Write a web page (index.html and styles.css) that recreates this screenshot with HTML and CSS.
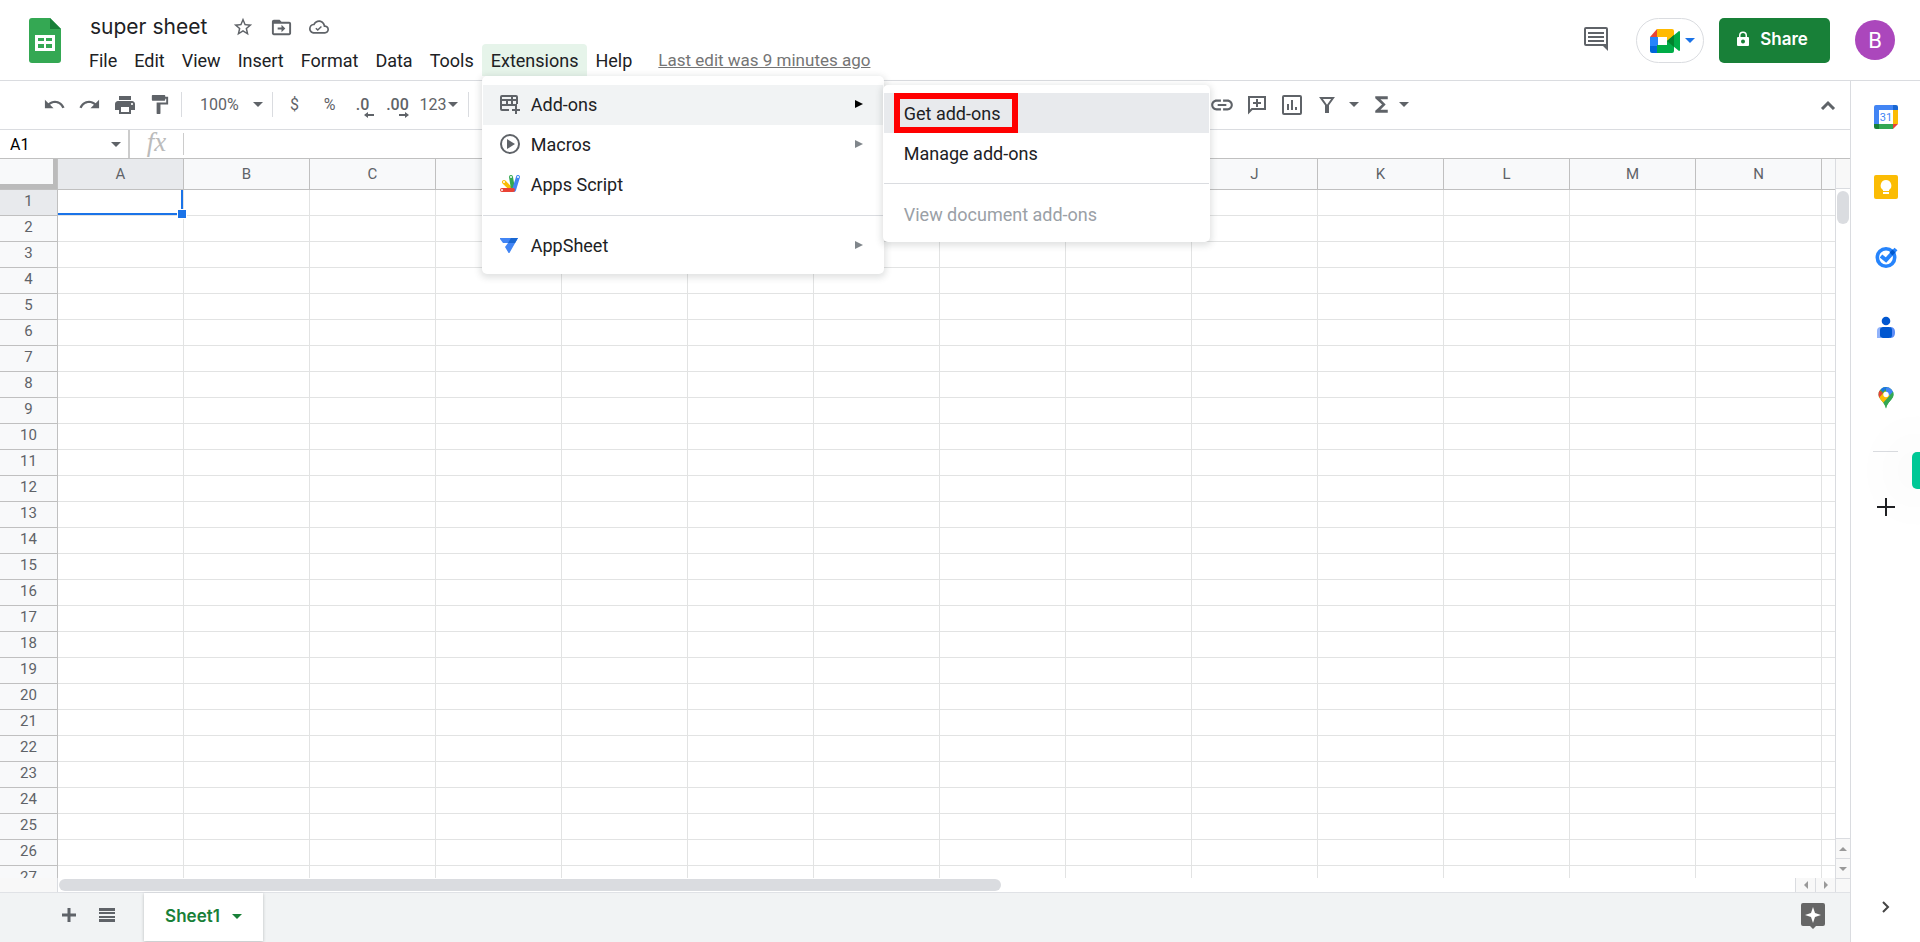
FILE: index.html
```html
<!DOCTYPE html>
<html lang="en">
<head>
<meta charset="utf-8">
<title>super sheet</title>
<link rel="stylesheet" href="styles.css">
</head>
<body>
<header class="header">
  <a class="logo" href="#" aria-label="Sheets home">
    <svg width="32" height="45" viewBox="0 0 32 45"><path fill="#34a853" d="M3 0h18l11 11v31a3 3 0 0 1-3 3H3a3 3 0 0 1-3-3V3a3 3 0 0 1 3-3z"/><path fill="#188038" d="M21 0l11 11H21z"/><path fill="#fff" fill-rule="evenodd" d="M6 17h20v16H6zM9 20v3h6v-3zM17 20v3h6v-3zM9 26v4h6v-4zM17 26v4h6v-4z"/></svg>
  </a>
  <div class="doc">
    <div class="title-row">
      <h1 class="title">super sheet</h1>
      <button class="title-btn" aria-label="Star"><svg width="22" height="22" viewBox="0 0 24 24"><path d="M22 9.24l-7.19-.62L12 2 9.19 8.63 2 9.24l5.46 4.73L5.82 21 12 17.27 18.18 21l-1.63-7.03L22 9.24zM12 15.4l-3.76 2.27 1-4.28-3.32-2.88 4.38-.38L12 6.1l1.71 4.04 4.38.38-3.32 2.88 1 4.28L12 15.4z"/></svg></button>
      <button class="title-btn" aria-label="Move"><svg width="23" height="23" viewBox="0 0 24 24"><path d="M20 6h-8l-2-2H4c-1.1 0-2 .9-2 2v12c0 1.1.9 2 2 2h16c1.1 0 2-.9 2-2V8c0-1.1-.9-2-2-2zm0 12H4V8h16v10zm-8-1l4-4-4-4v3H8v2h4z"/></svg></button>
      <button class="title-btn" aria-label="Document status"><svg width="20" height="20" viewBox="0 0 24 24"><path d="M19.35 10.04C18.67 6.59 15.64 4 12 4 9.11 4 6.61 5.64 5.36 8.04 2.35 8.36 0 10.91 0 14c0 3.31 2.69 6 6 6h13c2.76 0 5-2.24 5-5 0-2.64-2.05-4.78-4.65-4.96zM19 18H6c-2.21 0-4-1.79-4-4 0-2.05 1.53-3.76 3.56-3.97l1.07-.11.5-.95C8.08 7.14 9.94 6 12 6c2.62 0 4.88 1.86 5.39 4.43l.3 1.5 1.53.11c1.56.1 2.78 1.41 2.78 2.96 0 1.65-1.35 3-3 3zm-8.500-3.500l-1.700-1.700-1.200 1.200 2.900 2.900 5-5-1.200-1.200z"/></svg></button>
    </div>
    <nav class="menubar">
      <button class="menu-btn">File</button>
      <button class="menu-btn">Edit</button>
      <button class="menu-btn">View</button>
      <button class="menu-btn">Insert</button>
      <button class="menu-btn">Format</button>
      <button class="menu-btn">Data</button>
      <button class="menu-btn">Tools</button>
      <div class="menu-wrap">
        <button class="menu-btn menu-btn-open">Extensions</button>
        <div class="menu menu-main">
          <div class="submenu-wrap">
            <button class="item item-active">
              <svg class="item-icon" width="22" height="22" viewBox="0 0 22 22" fill="none" stroke="#5f6368" stroke-width="2"><path d="M10 17H3a1 1 0 0 1-1-1V4a1 1 0 0 1 1-1h14a1 1 0 0 1 1 1v7M2 7h16M2 12h16M8 7v5M13 3v9"/><path d="M17 13v8M13 17h8"/></svg>
              <span class="item-label">Add-ons</span>
              <svg class="item-arrow item-arrow-on" width="8" height="8" viewBox="0 0 8 8"><path d="M0 0l8 4-8 4z"/></svg>
            </button>
            <div class="menu menu-sub">
              <div class="marked">
                <button class="item item-focus">Get add-ons</button>
                <span class="marker"></span>
              </div>
              <button class="item">Manage add-ons</button>
              <hr class="rule">
              <button class="item item-off" disabled>View document add-ons</button>
            </div>
          </div>
          <button class="item">
            <svg class="item-icon" width="22" height="22" viewBox="0 0 22 22"><circle cx="11" cy="11" r="9" fill="none" stroke="#5f6368" stroke-width="2"/><path fill="#5f6368" d="M8 6l8 5-8 5z"/></svg>
            <span class="item-label">Macros</span>
            <svg class="item-arrow" width="8" height="8" viewBox="0 0 8 8"><path d="M0 0l8 4-8 4z"/></svg>
          </button>
          <button class="item">
            <svg class="item-icon" width="22" height="22" viewBox="0 0 22 22" stroke-linecap="round"><path stroke="#fbbc04" stroke-width="4" d="M5 9l8 8"/><path stroke="#34a853" stroke-width="4" d="M12 4l2 12"/><path stroke="#4285f4" stroke-width="4" d="M19 4l-4 13"/><path stroke="#ea4335" stroke-width="4" d="M3 17h11"/><g fill="#fff"><circle cx="5" cy="9" r="1"/><circle cx="12" cy="4" r="1"/><circle cx="19" cy="4" r="1"/><circle cx="3" cy="17" r="1"/></g></svg>
            <span class="item-label">Apps Script</span>
          </button>
          <hr class="rule">
          <button class="item">
            <svg class="item-icon" width="22" height="22" viewBox="0 0 22 22"><path fill="#4285f4" d="M1 4h18l-8 14a1 1 0 0 1-2 0l-3-5 3-4H4L1 5z"/><path fill="#1967d2" d="M12 4h7l-3 5H9z"/></svg>
            <span class="item-label">AppSheet</span>
            <svg class="item-arrow" width="8" height="8" viewBox="0 0 8 8"><path d="M0 0l8 4-8 4z"/></svg>
          </button>
        </div>
      </div>
      <button class="menu-btn">Help</button>
      <a class="last-edit" href="#">Last edit was 9 minutes ago</a>
    </nav>
  </div>
  <div class="actions">
    <button class="comments" aria-label="Comments"><svg width="26" height="26" viewBox="0 0 26 26" fill="none" stroke="#5f6368" stroke-width="2"><path d="M3 2h20a1 1 0 0 1 1 1v16H3a1 1 0 0 1-1-1V3a1 1 0 0 1 1-1zM5 7h16M5 11h16M5 15h16"/><path fill="#5f6368" stroke="none" d="M19 19h6v6z"/></svg></button>
    <button class="meet" aria-label="Meet">
      <svg width="30" height="24" viewBox="0 0 30 24"><path fill="#ea4335" d="M7 0v8H0z"/><path fill="#2684fc" d="M0 8h8v9H0z"/><path fill="#0066da" d="M0 17h8v7H2a2 2 0 0 1-2-2z"/><path fill="#ffba00" d="M7 0h15a2 2 0 0 1 2 2v7l-7 3V8H7z"/><path fill="#00ac47" d="M7 16h10v-4l7-3v13a2 2 0 0 1-2 2H7z"/><path fill="#00ac47" d="M17 12L29 2q1 0 1 1v18q0 1-1 1z"/><path fill="#00832d" d="M17 12l7-6v12z"/></svg>
      <svg width="10" height="5" viewBox="0 0 10 5"><path fill="#1a73e8" d="M0 0h10L5 5z"/></svg>
    </button>
    <button class="share">
      <svg width="12" height="16" viewBox="0 0 12 16"><path fill="#fff" fill-rule="evenodd" d="M2 6V4.500a4 4 0 0 1 8 0V6h1q1 0 1 1v7q0 1-1 1H1q-1 0-1-1V7q0-1 1-1zM3.500 6h5V4.500a2.500 2.500 0 0 0-5 0zM6 8.500a2 2 0 1 0 0 4 2 2 0 0 0 0-4z"/></svg>
      Share
    </button>
    <button class="avatar" aria-label="Account">B</button>
  </div>
</header>

<div class="main">
  <main class="workspace">
    <div class="toolbar">
      <button class="tool" aria-label="Undo"><svg width="23" height="23" viewBox="0 0 24 24"><path d="M12.500 8c-2.650 0-5.050.99-6.900 2.600L2 7v9h9l-3.620-3.620c1.390-1.160 3.160-1.880 5.120-1.880 3.540 0 6.550 2.310 7.600 5.500l2.370-.78C21.080 11.030 17.150 8 12.500 8z"/></svg></button>
      <button class="tool" aria-label="Redo"><svg width="23" height="23" viewBox="0 0 24 24"><path d="M18.400 10.600C16.550 8.990 14.150 8 11.500 8c-4.650 0-8.580 3.030-9.960 7.220L3.900 16c1.050-3.190 4.050-5.500 7.600-5.500 1.950 0 3.730.72 5.120 1.880L13 16h9V7l-3.600 3.600z"/></svg></button>
      <button class="tool" aria-label="Print"><svg width="24" height="24" viewBox="0 0 24 24"><path d="M19 8H5c-1.660 0-3 1.340-3 3v6h4v4h12v-4h4v-6c0-1.660-1.340-3-3-3zm-3 11H8v-5h8v5zm3-7c-.55 0-1-.45-1-1s.45-1 1-1 1 .45 1 1-.45 1-1 1zm-1-9H6v4h12V3z"/></svg></button>
      <button class="tool" aria-label="Paint format"><svg width="23" height="23" viewBox="0 0 24 24"><path d="M18 4V3c0-.55-.45-1-1-1H5c-.55 0-1 .45-1 1v4c0 .55.45 1 1 1h12c.55 0 1-.45 1-1V6h1v4H9v11c0 .55.45 1 1 1h2c.55 0 1-.45 1-1v-9h8V4h-3z"/></svg></button>
      <span class="sep"></span>
      <span class="zoom"><select class="zoom-select" aria-label="Zoom"><option>100%</option></select><svg width="10" height="5" viewBox="0 0 10 5"><path d="M0 0h10L5 5z"/></svg></span>
      <span class="sep"></span>
      <button class="tool">$</button>
      <button class="tool">%</button>
      <button class="tool tool-dec">.0<svg class="dec-arrow" width="10" height="6" viewBox="0 0 10 6"><path d="M0 3l4-3v2h6v2H4v2z"/></svg></button>
      <button class="tool tool-dec">.00<svg class="dec-arrow" width="10" height="6" viewBox="0 0 10 6"><path d="M10 3L6 0v2H0v2h6v2z"/></svg></button>
      <button class="tool tool-wide">123<svg width="10" height="5" viewBox="0 0 10 5"><path d="M0 0h10L5 5z"/></svg></button>
      <span class="sep"></span>
      <span class="toolbar-gap"></span>
      <button class="tool" aria-label="Insert link"><svg width="26" height="26" viewBox="0 0 24 24"><path d="M3.900 12c0-1.710 1.390-3.100 3.100-3.100h4V7H7c-2.760 0-5 2.240-5 5s2.240 5 5 5h4v-1.900H7c-1.710 0-3.100-1.390-3.100-3.100zM8 13h8v-2H8v2zm9-6h-4v1.900h4c1.710 0 3.100 1.390 3.100 3.100s-1.390 3.100-3.100 3.100h-4V17h4c2.760 0 5-2.240 5-5s-2.240-5-5-5z"/></svg></button>
      <button class="tool" aria-label="Insert comment"><svg width="20" height="20" viewBox="0 0 20 20" fill="none" stroke="#5f6368" stroke-width="2"><path d="M2 17V2h16v12H5zM10 4v8M6 8h8"/></svg></button>
      <button class="tool" aria-label="Insert chart"><svg width="20" height="20" viewBox="0 0 20 20" fill="none" stroke="#5f6368" stroke-width="2"><rect x="1" y="1" width="18" height="18" rx="1"/><path d="M6 9v6M10 5v10M14 12v3"/></svg></button>
      <button class="tool" aria-label="Filter"><svg width="16" height="18" viewBox="0 0 16 18" fill="none" stroke="#5f6368" stroke-width="2"><path d="M2 2h12L9 9v7H7V9z"/></svg></button>
      <button class="tool tool-caret" aria-label="Filter views"><svg width="10" height="5" viewBox="0 0 10 5"><path d="M0 0h10L5 5z"/></svg></button>
      <button class="tool" aria-label="Functions"><svg width="25" height="25" viewBox="0 0 24 24"><path d="M18 4H6v2l6.500 6L6 18v2h12v-3h-7l5-5-5-5h7z"/></svg></button>
      <button class="tool-caret-sm" aria-label="More functions"><svg width="10" height="5" viewBox="0 0 10 5"><path d="M0 0h10L5 5z"/></svg></button>
      <button class="tool tool-end" aria-label="Hide the menus"><svg width="16" height="10" viewBox="0 0 16 10" fill="none" stroke="#5f6368" stroke-width="3"><path d="M2 9l6-6 6 6"/></svg></button>
    </div>

    <div class="formula">
      <div class="namebox"><input class="name-input" aria-label="Name box" value="A1"><svg width="10" height="5" viewBox="0 0 10 5"><path d="M0 0h10L5 5z"/></svg></div>
      <label class="fx" for="fx-input">fx</label>
      <input class="fx-input" id="fx-input">
    </div>

    <div class="sheet-area">
      <div class="sheet">
        <table class="grid" id="grid"></table>
      </div>
      <div class="vscroll">
        <div class="vscroll-head"></div>
        <div class="vthumb"></div>
        <button class="vbtn" aria-label="Scroll up"><svg width="8" height="4" viewBox="0 0 8 4"><path d="M0 4l4-4 4 4z"/></svg></button>
        <button class="vbtn" aria-label="Scroll down"><svg width="8" height="4" viewBox="0 0 8 4"><path d="M0 0h8L4 4z"/></svg></button>
      </div>
      <div class="hscroll">
        <div class="hscroll-head"></div>
        <div class="htrack"><div class="hthumb"></div></div>
        <button class="hbtn" aria-label="Scroll left"><svg width="4" height="8" viewBox="0 0 4 8"><path d="M4 0v8L0 4z"/></svg></button>
        <button class="hbtn" aria-label="Scroll right"><svg width="4" height="8" viewBox="0 0 4 8"><path d="M0 0v8l4-4z"/></svg></button>
      </div>
      <div class="corner"></div>
    </div>

    <footer class="footer">
      <button class="foot-btn" aria-label="Add sheet"><svg width="14" height="14" viewBox="0 0 14 14" fill="none" stroke="#5f6368" stroke-width="3"><path d="M7 0v14M0 7h14"/></svg></button>
      <button class="foot-btn" aria-label="All sheets"><svg width="16" height="14" viewBox="0 0 16 14"><path d="M0 0h16v3H0zM0 4h16v2H0zM0 8h16v2H0zM0 11h16v3H0z"/></svg></button>
      <button class="tab">Sheet1<svg width="10" height="5" viewBox="0 0 10 5"><path d="M0 0h10L5 5z"/></svg></button>
      <button class="explore" aria-label="Explore"><svg width="24" height="26" viewBox="0 0 24 26"><path fill="#666" d="M2 0h20a2 2 0 0 1 2 2v19a2 2 0 0 1-2 2h-7l-3 3-3-3H2a2 2 0 0 1-2-2V2a2 2 0 0 1 2-2z"/><path fill="#fff" d="M12 4l2 6 6 2-6 2-2 6-2-6-6-2 6-2z"/></svg></button>
    </footer>
  </main>

  <aside class="side">
    <button class="side-btn" aria-label="Calendar"><svg width="24" height="24" viewBox="0 0 24 24"><path fill="#4285f4" d="M2 0h17v5H5v14H0V2a2 2 0 0 1 2-2z"/><path fill="#1967d2" d="M19 0h3a2 2 0 0 1 2 2v3h-5z"/><path fill="#fbbc04" d="M19 5h5v14h-5z"/><path fill="#34a853" d="M5 19h14v5H5z"/><path fill="#188038" d="M0 19h5v5H2a2 2 0 0 1-2-2z"/><path fill="#ea4335" d="M19 19h5l-5 5z"/><path fill="#fff" d="M5 5h14v14H5z"/><text class="cal-text" x="12" y="16" text-anchor="middle">31</text></svg></button>
    <button class="side-btn" aria-label="Keep"><svg width="24" height="24" viewBox="0 0 24 24"><rect width="24" height="24" rx="2" fill="#fbbc04"/><path fill="#fff" d="M12 5a5.500 5.500 0 0 1 3 10v1H9v-1a5.500 5.500 0 0 1 3-10zM9 17h6v2H9z"/></svg></button>
    <button class="side-btn" aria-label="Tasks"><svg width="24" height="24" viewBox="0 0 24 24" fill="none"><circle cx="12" cy="12.500" r="8.700" stroke="#2684fc" stroke-width="3.600"/><path stroke="#2684fc" stroke-width="4" d="M7 11l5 4L22 4"/><path stroke="#0057cc" stroke-width="4" d="M17 9l3-3"/></svg></button>
    <button class="side-btn" aria-label="Contacts"><svg width="24" height="24" viewBox="0 0 24 24"><path fill="#91b3fb" d="M3 23v-7q0-4 4-4v11z"/><path fill="#5c8df6" d="M16 12q5 0 5 5v1q0 5-5 5z"/><rect x="6" y="12" width="12" height="11" rx="3" fill="#0057d0"/><circle cx="12" cy="6" r="4.300" fill="#0057d0"/></svg></button>
    <button class="side-btn" aria-label="Maps"><svg width="18" height="24" viewBox="0 0 18 24"><defs><clipPath id="pin"><path d="M9 2a7.500 7.500 0 0 1 7.500 7.500c0 5-6 7-7.500 14-1.500-7-7.500-9-7.500-14A7.500 7.500 0 0 1 9 2z"/></clipPath></defs><g clip-path="url(#pin)"><path fill="#34a853" d="M0 0h18v24H0z"/><path fill="#4285f4" d="M9 0h9v5l-9 9z"/><path fill="#1a73e8" d="M0 0h12L6 7z"/><path fill="#ea4335" d="M0 3l6 5-5 7H0z"/><path fill="#fbbc04" d="M0 15l8-9 5 5-8 9z"/><path fill="#34a853" d="M18 5L5 19l3 5h10z"/></g><circle cx="9" cy="9.500" r="2.700" fill="#fff"/></svg></button>
    <hr class="side-rule">
    <button class="side-btn" aria-label="Get add-ons panel"><svg width="18" height="18" viewBox="0 0 18 18"><path fill="#202124" d="M8 0h2v8h8v2h-8v8H8v-8H0V8h8z"/></svg></button>
    <button class="side-btn side-toggle" aria-label="Hide side panel"><svg width="10" height="14" viewBox="0 0 10 14" fill="none" stroke="#444" stroke-width="2"><path d="M2 2l5 5-5 5"/></svg></button>
  </aside>
</div>
<div class="edge-tab"></div>
<script src="grid.js"></script>
</body>
</html>
```
FILE: styles.css
```css
* { box-sizing: border-box; }
body {
  margin: 0;
  height: 100vh;
  display: flex;
  flex-direction: column;
  overflow: hidden;
  position: relative;
  background: #fff;
  color: #202124;
  font-family: Roboto, "Liberation Sans", sans-serif;
  font-size: 18px;
}
button, input, select {
  font: inherit;
  color: inherit;
  border: 0;
  background: none;
  padding: 0;
  margin: 0;
}
svg { flex: none; display: block; }

.header {
  display: flex;
  border-bottom: 1px solid #dadce0;
  height: 81px;
  flex: none;
}
.logo { padding: 18px 0 0 29px; width: 80px; }
.doc { padding-top: 12px; }
.title-row { display: flex; align-items: center; height: 30px; margin-bottom: 2px; padding-left: 10px; }
.title {
  margin: 0 17px 0 0;
  font-family: Inter, "Liberation Sans", sans-serif;
  font-size: 21px;
  line-height: 30px;
  font-weight: 400;
}
.title-btn {
  width: 38px;
  height: 30px;
  display: flex;
  align-items: center;
  justify-content: center;
  fill: #5f6368;
}
.menubar { display: flex; height: 32px; white-space: nowrap; }
.menu-wrap { position: relative; }
.menubar > * { margin-right: -1px; }
.menu-btn { height: 32px; padding: 0 9px; border-radius: 4px 4px 0 0; }
.menu-btn-open { background: #e6f4ea; }
.last-edit { margin-left: 18px; line-height: 33px; font-size: 17px; color: #757575; }

.menu {
  position: absolute;
  z-index: 5;
  background: #fff;
  border-radius: 5px;
  box-shadow: 0 2px 6px 2px rgba(60, 64, 67, .15);
}
.menu-main { top: 32px; left: 0; width: 402px; padding: 9px 1px 8px; }
.menu-sub { top: 0; left: 400px; width: 327px; padding: 8px 1px; }
.submenu-wrap, .marked { position: relative; }
.item {
  display: flex;
  align-items: center;
  width: 100%;
  height: 40px;
  padding: 0 20px 0 16px;
  text-align: left;
}
.menu-main > .item, .item-active { padding-bottom: 2px; }
.menu-sub .item { padding-left: 20px; }
.item-active { background: #f1f3f4; }
.item-focus { background: #e8eaed; }
.item-off { color: #9aa0a6; }
.item-icon { margin-right: 10px; }
.item-label { flex: 1; }
.item-arrow { fill: #80868b; }
.item-arrow-on { fill: #000; }
.rule { border: 0; border-top: 1px solid #dadce0; margin: 10px 0; }
.marker {
  position: absolute;
  inset: 0 auto 0 10px;
  width: 124px;
  border: 6px solid #f00;
}

.actions { margin-left: auto; display: flex; padding: 18px 25px 0 0; }
.comments { width: 26px; height: 26px; margin: 8px 27px 0 0; }
.meet {
  display: flex;
  align-items: center;
  justify-content: center;
  gap: 5px;
  width: 68px;
  height: 45px;
  padding-left: 4px;
  border: 1px solid #dadce0;
  border-radius: 23px;
  margin-right: 15px;
}
.share {
  display: flex;
  align-items: center;
  justify-content: center;
  gap: 11px;
  width: 111px;
  height: 45px;
  padding: 0 4px 3px 0;
  border-radius: 5px;
  background: #188038;
  color: #fff;
  font: 600 17px Inter, sans-serif;
  margin-right: 25px;
}
.avatar {
  width: 40px;
  height: 40px;
  margin-top: 2px;
  border-radius: 50%;
  background: #ab47bc;
  color: #fff;
  font-size: 22px;
}

.main { flex: 1; display: flex; min-height: 0; }
.workspace { flex: 1; min-width: 0; display: flex; flex-direction: column; }
.toolbar {
  display: flex;
  align-items: center;
  flex: none;
  height: 49px;
  padding: 0 5px 1px 37px;
  border-bottom: 1px solid #dadce0;
  color: #5f6368;
  fill: #5f6368;
  font-size: 16px;
}
.tool {
  position: relative;
  flex: none;
  display: flex;
  align-items: center;
  justify-content: center;
  width: 35px;
  height: 32px;
}
.tool-dec { font-weight: 500; align-items: flex-start; padding: 6px 4px 0 0; }
.dec-arrow { position: absolute; right: 8px; bottom: 3px; }
.tool-wide { width: 47px; gap: 2px; padding-right: 3px; }
.tool-caret { width: 20px; }
.tool-caret-sm { width: 10px; }
.tool-end { margin-left: auto; }
.sep { flex: none; width: 1px; height: 25px; background: #dadce0; margin: 0 4px; }
.zoom { display: flex; align-items: center; width: 82px; padding-left: 14px; gap: 13px; }
.zoom-select { appearance: none; width: 40px; }
.toolbar-gap { flex: none; width: 731px; }

.formula {
  display: flex;
  flex: none;
  height: 29px;
  border-bottom: 1px solid #c0c0c0;
}
.namebox {
  display: flex;
  align-items: center;
  width: 130px;
  padding: 0 7px 0 10px;
  border-right: 2px solid #ccc;
  fill: #5f6368;
}
.name-input { flex: 1; min-width: 0; font-size: 16px; color: #000; }
.fx {
  width: 53px;
  text-align: center;
  font: italic 27px/25px "Liberation Serif", serif;
  color: #bbb;
}
.fx-input { flex: 1; border-left: 1px solid #ccc; margin: 3px 0; padding-left: 6px; font-size: 16px; outline: 0; }

.sheet-area {
  flex: 1;
  min-height: 0;
  display: grid;
  grid-template-columns: 1fr 15px;
  grid-template-rows: 1fr 14px;
}
.sheet { overflow: hidden; min-width: 0; }
.grid {
  width: 100%;
  table-layout: fixed;
  border-collapse: separate;
  border-spacing: 0;
  font-size: 15px;
}
.grid th, .grid td { padding: 0; border: 0 solid #e2e3e3; border-width: 0 1px 1px 0; height: 26px; }
.grid th { background: #f8f9fa; border-color: #c0c0c0; color: #5f6368; font-weight: 400; line-height: 20px; }
.grid tbody th { padding-bottom: 3px; }
.grid thead th { height: 31px; }
.grid .col-num { width: 58px; }
.grid .col { width: 126px; }
.grid th.selected { background: #e8eaed; }
.grid .select-all { box-shadow: inset -4px -5px #bbb; }
.grid tr > :last-child { border-right: 0; }
.active-cell { position: relative; }
.selection {
  position: absolute;
  inset: 0 0 0 0;
  border: 0 solid #1a73e8;
  border-width: 0 2px 2px 0;
}
.handle {
  position: absolute;
  right: -6px;
  bottom: -6px;
  width: 10px;
  height: 10px;
  background: #1a73e8;
  border: 1px solid #fff;
}

.vscroll { display: flex; flex-direction: column; border-left: 1px solid #dadce0; }
.vscroll-head { height: 30px; flex: none; background: #f8f8f8; border-bottom: 1px solid #dadce0; }
.vthumb { width: 12px; height: 33px; margin: 2px 1px auto; border-radius: 6px; background: #dadce0; }
.vbtn, .hbtn {
  display: flex;
  align-items: center;
  justify-content: center;
  background: #f8f8f8;
  fill: #999;
}
.vbtn { height: 20px; border-top: 1px solid #dadce0; }
.hscroll { display: flex; }
.hscroll-head { width: 58px; background: #f8f8f8; border-right: 1px solid #dadce0; }
.htrack { flex: 1; padding: 1px; }
.hthumb { width: 54.3%; height: 12px; border-radius: 6px; background: #dadce0; }
.hbtn { width: 20px; border-left: 1px solid #dadce0; }
.corner { background: #f8f8f8; border-left: 1px solid #dadce0; border-top: 1px solid #dadce0; }

.footer {
  display: flex;
  flex: none;
  height: 50px;
  padding: 0 25px 0 50px;
  background: #f1f3f4;
  border-top: 1px solid #e0e2e6;
  fill: #5f6368;
}
.foot-btn { width: 38px; height: 43px; display: flex; align-items: center; justify-content: center; }
.tab {
  display: flex;
  align-items: center;
  justify-content: center;
  gap: 12px;
  width: 119px;
  height: 48px;
  padding-bottom: 2px;
  margin-left: 18px;
  background: #fff;
  color: #188038;
  fill: #188038;
  font: 600 17px Inter, sans-serif;
  box-shadow: 0 1px 3px rgba(60, 64, 67, .3);
}
.explore { margin: 10px 0 0 auto; height: 26px; }

.side {
  flex: none;
  width: 70px;
  display: flex;
  flex-direction: column;
  align-items: center;
  padding: 11px 0 10px;
  border-left: 1px solid #dadce0;
}
.side-btn {
  width: 50px;
  height: 50px;
  margin-bottom: 20px;
  display: flex;
  align-items: center;
  justify-content: center;
}
.cal-text { font: 11px Roboto, sans-serif; fill: #4285f4; }
.side-rule { width: 25px; border: 0; border-top: 1px solid #dadce0; margin: 9px 0 30px; }
.side-toggle { margin: auto 0 0; }
.edge-tab {
  position: absolute;
  right: 0;
  top: 452px;
  width: 8px;
  height: 37px;
  border-radius: 5px 0 0 5px;
  background: #00c896;
  box-shadow: 0 0 60px 10px rgba(0, 0, 0, .06);
}
```
FILE: grid.js
```js
const columns = "ABCDEFGHIJKLMN".split("");
const rowCount = 27;

let html = '<thead><tr><th class="col-num select-all"></th>';
columns.forEach((name, i) => {
  html += `<th class="col${i === 0 ? " selected" : ""}" scope="col">${name}</th>`;
});
html += "<th></th></tr></thead><tbody>";

for (let row = 1; row <= rowCount; row++) {
  html += `<tr><th scope="row"${row === 1 ? ' class="selected"' : ""}>${row}</th>`;
  for (let col = 0; col <= columns.length; col++) {
    html += row === 1 && col === 0
      ? '<td class="active-cell"><span class="selection"><span class="handle"></span></span></td>'
      : "<td></td>";
  }
  html += "</tr>";
}
document.getElementById("grid").innerHTML = html + "</tbody>";
```
